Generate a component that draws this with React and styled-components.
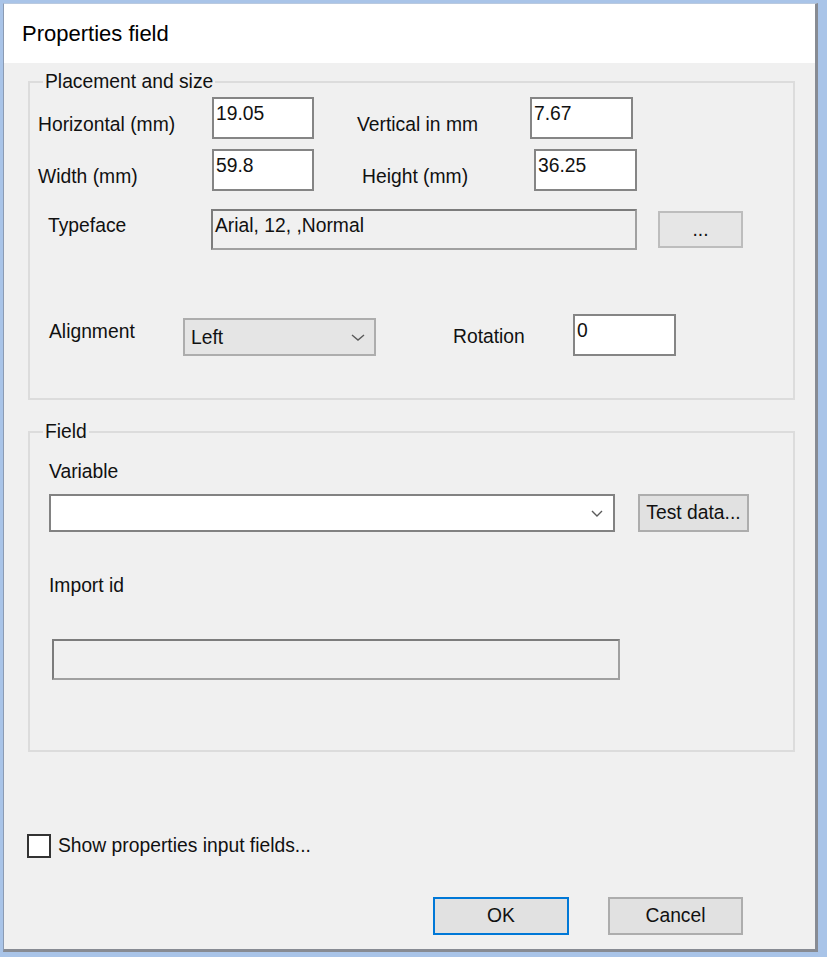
import React from 'react';
import styled, { createGlobalStyle } from 'styled-components';

const Global = createGlobalStyle`
  html, body { margin: 0; padding: 0; }
  body {
    background: #a9c4e8;
    width: 827px;
    height: 957px;
    overflow: hidden;
    font-family: "Liberation Sans", Arial, sans-serif;
    color: #000;
  }
  #root { width: 827px; height: 957px; }
`;

const Window = styled.div`
  margin: 3px 0 0 3px;
  width: 815px;
  height: 949px;
  box-sizing: border-box;
  border-left: 1px solid #8b9bb3;
  border-top: 1px solid #b9c9df;
  border-right: 3px solid #878b93;
  border-bottom: 3px solid #878b93;
  display: flex;
  flex-direction: column;
  background: #f0f0f0;
`;

const TitleBar = styled.div`
  height: 59px;
  flex-shrink: 0;
  background: #fff;
  padding-left: 18px;
  font-size: 22px;
  line-height: 59px;
  color: #000;
`;

const Content = styled.div`
  flex: 1;
  padding: 8px 20px 0 24px;
  display: flex;
  flex-direction: column;
`;

const Group = styled.fieldset`
  margin: ${p => p.$mt || 0}px 0 0 0;
  padding: 0 0 ${p => p.$pb}px 0;
  border: 2px solid #dcdcdc;
  min-width: 0;
`;

const Legend = styled.legend`
  margin-left: 13px;
  padding: 0 2px;
  font-size: 19.3px;
  line-height: 22px;
  color: #111;
`;

const Row = styled.div`
  display: flex;
  align-items: flex-start;
  margin-top: ${p => p.$mt || 0}px;
`;

const Label = styled.div`
  flex-shrink: 0;
  width: ${p => (p.$w ? `${p.$w}px` : 'auto')};
  margin-left: ${p => p.$ml || 0}px;
  margin-top: ${p => p.$mt || 0}px;
  font-size: 19.3px;
  line-height: 22px;
  white-space: nowrap;
  color: #111;
`;

const TextBox = styled.div`
  flex-shrink: 0;
  box-sizing: border-box;
  width: ${p => p.$w}px;
  height: ${p => p.$h || 42}px;
  margin-left: ${p => p.$ml || 0}px;
  margin-top: ${p => p.$mt || 0}px;
  background: ${p => (p.$readonly ? '#f0f0f0' : '#fff')};
  border: 2px solid;
  border-color: ${p => (p.$readonly ? '#7c7c7c #a0a0a0 #a0a0a0 #7c7c7c' : '#858585')};
  padding: 4px 2px;
  font-size: 19.3px;
  line-height: 22px;
  white-space: nowrap;
  color: #111;
`;

const Button = styled.div`
  flex-shrink: 0;
  box-sizing: border-box;
  width: ${p => p.$w}px;
  height: ${p => p.$h || 38}px;
  margin-left: ${p => p.$ml || 0}px;
  margin-top: ${p => p.$mt || 0}px;
  background: ${p => (p.$light ? '#e6e6e6' : '#e1e1e1')};
  border: 2px solid ${p => (p.$default ? '#0078d7' : p.$light ? '#bdbdbd' : '#adadad')};
  display: flex;
  align-items: center;
  justify-content: center;
  font-size: 19.3px;
  line-height: 22px;
  white-space: nowrap;
  color: #111;
`;

const Combo = styled.div`
  flex-shrink: 0;
  box-sizing: border-box;
  width: ${p => p.$w}px;
  height: ${p => p.$h || 38}px;
  margin-left: ${p => p.$ml || 0}px;
  margin-top: ${p => p.$mt || 0}px;
  background: ${p => (p.$flat ? '#e5e5e5' : '#fff')};
  border: 2px solid ${p => (p.$flat ? '#adadad' : '#828282')};
  display: flex;
  align-items: center;
  padding: 0 ${p => p.$pr}px 0 6px;
  font-size: 19.3px;
  line-height: 22px;
  color: #111;
`;

const ComboText = styled.span`
  flex: 1;
  padding-top: 2px;
`;

const Chevron = ({ w, h }) => (
  <svg width={w} height={h} viewBox={`0 0 ${w} ${h}`} style={{ display: 'block' }}>
    <polyline
      points={`1,1 ${w / 2},${h - 1} ${w - 1},1`}
      fill="none"
      stroke="#5a5a5a"
      strokeWidth="1.4"
    />
  </svg>
);

const CheckBox = styled.div`
  flex-shrink: 0;
  box-sizing: border-box;
  width: 24px;
  height: 24px;
  margin-left: ${p => p.$ml || 0}px;
  background: #fff;
  border: 2px solid #333;
`;

export default function App() {
  return (
    <>
      <Global />
      <Window>
        <TitleBar>Properties field</TitleBar>
        <Content>
          <Group $pb={42}>
            <Legend>Placement and size</Legend>
            <Row $mt={4}>
              <Label $ml={8} $w={174} $mt={17}>Horizontal (mm)</Label>
              <TextBox $w={102}>19.05</TextBox>
              <Label $ml={43} $w={173} $mt={17}>Vertical in mm</Label>
              <TextBox $w={103}>7.67</TextBox>
            </Row>
            <Row $mt={10}>
              <Label $ml={8} $w={174} $mt={17}>Width (mm)</Label>
              <TextBox $w={102}>59.8</TextBox>
              <Label $ml={48} $w={172} $mt={17}>Height (mm)</Label>
              <TextBox $w={103}>36.25</TextBox>
            </Row>
            <Row $mt={18}>
              <Label $ml={18} $w={163} $mt={6}>Typeface</Label>
              <TextBox $w={426} $h={41} $readonly>Arial, 12, ,Normal</TextBox>
              <Button $ml={21} $w={85} $h={37} $mt={2} $light>...</Button>
            </Row>
            <Row $mt={64}>
              <Label $ml={19} $w={134} $mt={7}>Alignment</Label>
              <Combo $w={193} $mt={4} $flat $pr={9}>
                <ComboText>Left</ComboText>
                <Chevron w={14} h={7} />
              </Combo>
              <Label $ml={77} $w={120} $mt={12}>Rotation</Label>
              <TextBox $w={103}>0</TextBox>
            </Row>
          </Group>

          <Group $mt={21} $pb={70}>
            <Legend>Field</Legend>
            <Row $mt={18}>
              <Label $ml={19}>Variable</Label>
            </Row>
            <Row $mt={11}>
              <Combo $ml={19} $w={566} $pr={10}>
                <ComboText />
                <Chevron w={12} h={7} />
              </Combo>
              <Button $ml={23} $w={111}>Test data...</Button>
            </Row>
            <Row $mt={43}>
              <Label $ml={19}>Import id</Label>
            </Row>
            <Row $mt={42}>
              <TextBox $ml={22} $w={568} $h={41} $readonly />
            </Row>
          </Group>

          <Row $mt={82}>
            <CheckBox $ml={-1} />
            <Label $ml={7} $mt={1}>Show properties input fields...</Label>
          </Row>
          <Row $mt={39}>
            <Button $ml={405} $w={136} $default>OK</Button>
            <Button $ml={39} $w={135}>Cancel</Button>
          </Row>
        </Content>
      </Window>
    </>
  );
}
